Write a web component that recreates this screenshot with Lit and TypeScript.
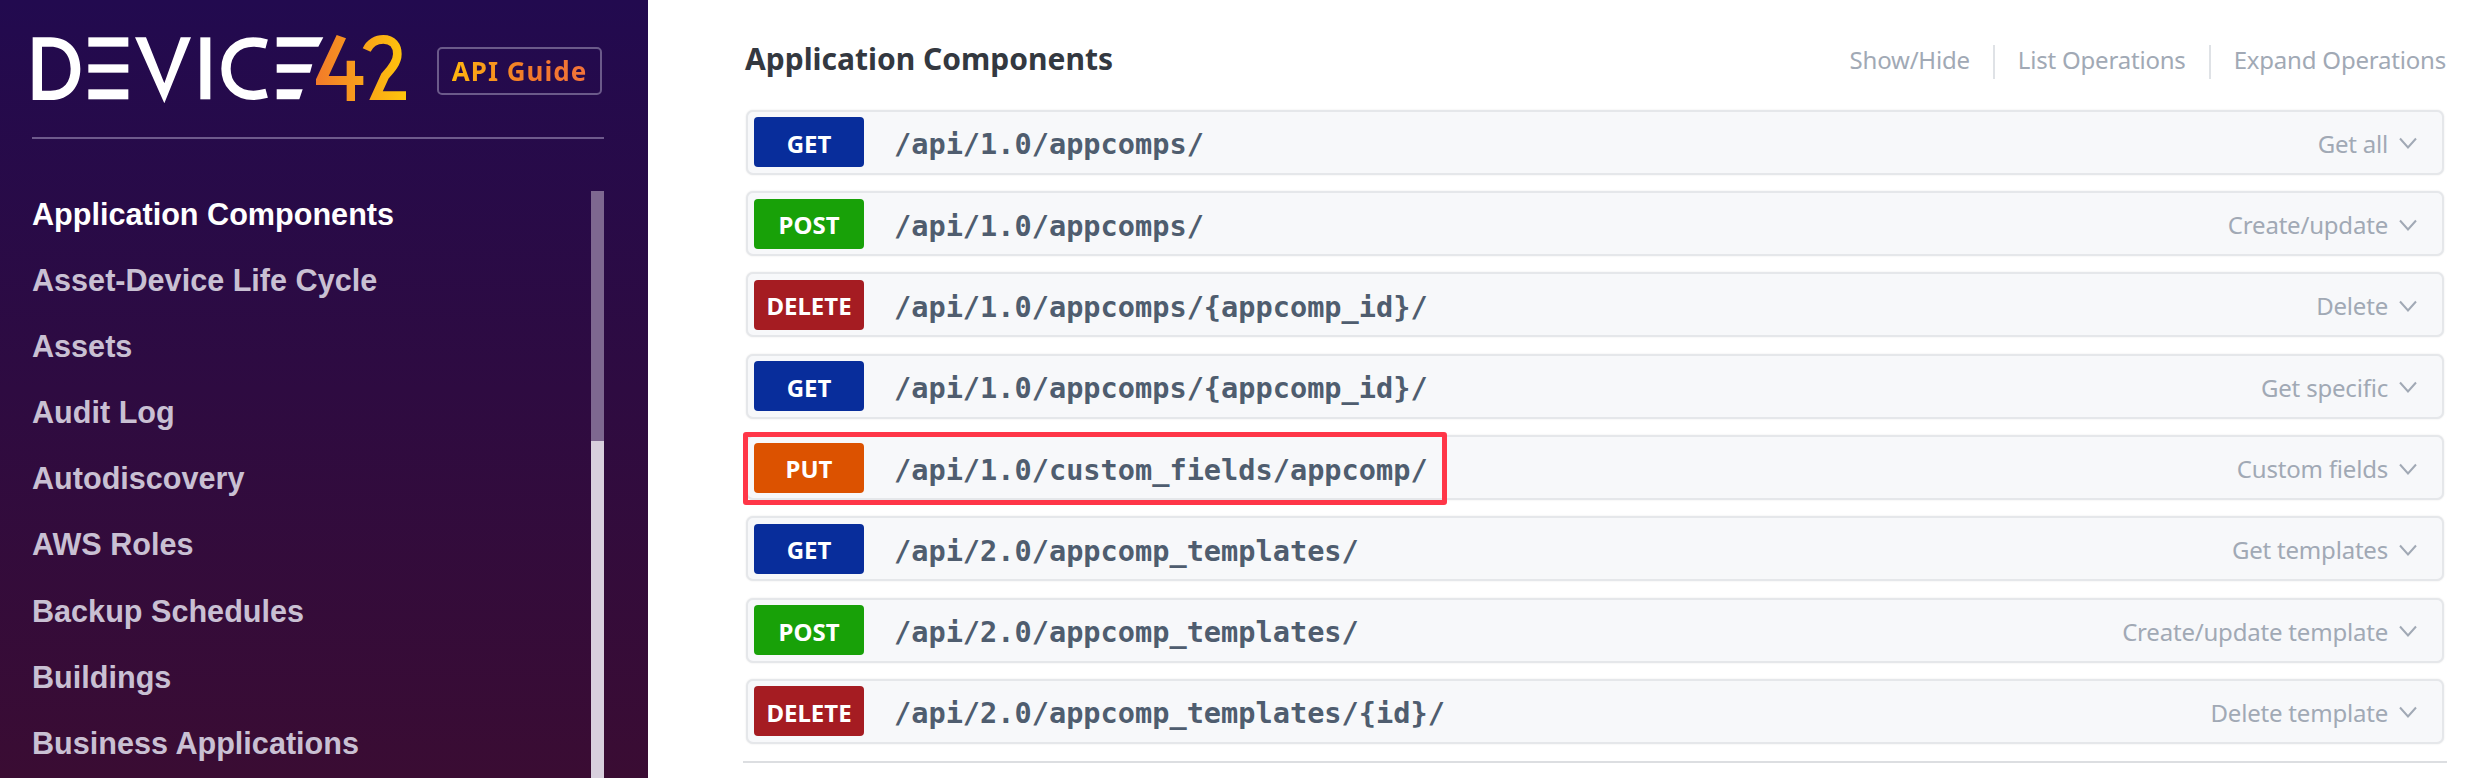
import { LitElement, html, css, svg } from "lit";
import { customElement } from "lit/decorators.js";

const NAV = ["Application Components","Asset-Device Life Cycle","Assets","Audit Log","Autodiscovery","AWS Roles","Backup Schedules","Buildings","Business Applications"];
const ROWS = [
  ["GET","/api/1.0/appcomps/","Get all"],
  ["POST","/api/1.0/appcomps/","Create/update"],
  ["DELETE","/api/1.0/appcomps/{appcomp_id}/","Delete"],
  ["GET","/api/1.0/appcomps/{appcomp_id}/","Get specific"],
  ["PUT","/api/1.0/custom_fields/appcomp/","Custom fields"],
  ["GET","/api/2.0/appcomp_templates/","Get templates"],
  ["POST","/api/2.0/appcomp_templates/","Create/update template"],
  ["DELETE","/api/2.0/appcomp_templates/{id}/","Delete template"],
];

const logo = svg`
  <defs>
    <linearGradient id="lg" gradientUnits="userSpaceOnUse" x1="888" y1="0" x2="1158" y2="0">
      <stop offset="0" stop-color="#f27a2a"/><stop offset="1" stop-color="#ffc60b"/>
    </linearGradient>
  </defs>
  <g fill="#fff">
    <path fill-rule="evenodd" d="M38 52H92C150 52 181 95 181 146C181 198 150 240 92 240H38ZM66 80V212H92C132 212 152 185 152 146C152 108 132 80 92 80Z"/>
    <rect x="205" y="52" width="120" height="28"/><rect x="205" y="133" width="120" height="25"/><rect x="205" y="208" width="120" height="30"/>
    <polygon points="345,52 378,52 433,190 482,52 513,52 433,250"/>
    <rect x="541" y="52" width="30" height="186"/>
    <path fill="none" stroke="#fff" stroke-width="28" d="M740 72C725 68 712 66 700 66C650 66 618 100 618 146C618 192 650 226 700 226C712 226 725 224 740 220"/>
    <polygon points="770,52 910,52 895,80 770,80"/><polygon points="770,133 877,133 870,158 770,158"/><polygon points="770,208 848,208 838,238 770,238"/>
  </g>
  <g fill="url(#lg)">
    <polygon points="950,45 978,55 926,168 980,168 980,122 1005,122 1005,168 1030,168 1030,195 1005,195 1005,243 980,243 980,195 888,195 888,178"/>
    <path fill="none" stroke="url(#lg)" stroke-width="26" d="M1040 90C1050 68 1070 58 1090 58C1118 58 1132 78 1132 102C1132 128 1112 150 1095 168L1068 227H1158"/>
  </g>`;

@customElement("app-root")
export class AppRoot extends LitElement {
  static styles = css`
    :host { display: block; width: 2480px; height: 778px; overflow: hidden; background: #fff; }
    * { box-sizing: border-box; }
    .page { display: flex; height: 778px; }
    .side { width: 648px; flex: none; height: 778px; padding: 0 44px 0 32px; overflow: hidden;
      background: linear-gradient(180deg, #220a4f 0%, #3a0c33 100%); display: flex; flex-direction: column; }
    .brand { display: flex; align-items: flex-start; height: 139px; flex: none; border-bottom: 2px solid #6e5a8c; }
    .logo { width: 400px; height: 100px; margin: 20px 0 0 -12px; flex: none; }
    .guide { margin: 47px 0 0 17px; width: 165px; height: 48px; border: 2px solid #6b5a8a; border-radius: 5px;
      display: flex; align-items: center; justify-content: center; }
    .guide span { font: 700 26px "Noto Sans", sans-serif; letter-spacing: 1px; color: transparent;
      background: linear-gradient(90deg, #ffb60f, #f27a2a 55%, #f2733a); -webkit-background-clip: text; background-clip: text; }
    .navwrap { flex: 1; display: flex; justify-content: space-between; margin-top: 42px; min-height: 0; }
    .nav { display: flex; flex-direction: column; }
    .nav a { font: 700 30.6px/66.1px "Liberation Sans", sans-serif; color: #c9c0d3; white-space: nowrap; height: 66.1px; flex: none; }
    .nav a.on { color: #fff; }
    .track { width: 13px; margin-top: 10px; background: #d8cfdd; flex: none; }
    .thumb { height: 250px; background: #7e6890; }
    .main { flex: 1; padding: 0 36px 0 98px; font-family: "Noto Sans", sans-serif; }
    .head { height: 109.7px; display: flex; justify-content: space-between; align-items: flex-start; }
    h2 { margin: 38px 0 0 -1px; font: 700 30px/42px "Noto Sans", sans-serif; color: #333840; white-space: nowrap; }
    .links { display: flex; align-items: flex-start; margin: 45px 0 0; height: 34px; }
    .links a { font-size: 24px; letter-spacing: -0.2px; color: #a1a9b5; white-space: nowrap; padding: 0 23px; height: 34px; border-left: 2px solid #dfe2e6; line-height: 30px; }
    .links a:first-child { border-left: 0; }
    .links a:last-child { padding-right: 0; margin-right: -2px; }
    .rows { display: flex; flex-direction: column; gap: 16.33px; }
    .row { position: relative; height: 65px; background: #f7f8fa; border: 2px solid #e5e7ea; border-radius: 7px;
      box-shadow: 0 0 2px rgba(0,0,0,.1);
      display: flex; align-items: center; padding: 0 25px 0 6px; }
    .badge { width: 110px; height: 50px; flex: none; border-radius: 4px; color: #fff; display: flex; align-items: center; justify-content: center;
      padding-top: 2px; font: 700 24px "Noto Sans", sans-serif; }
    .GET { background: #082d9b; } .POST { background: #18a108; } .DELETE { background: #a51c22; } .PUT { background: #dc5200; }
    .path { margin-left: 30px; padding-top: 4px; font: 700 28.6px "DejaVu Sans Mono", monospace; color: #4f5d6f; white-space: nowrap; }
    .sum { margin-left: auto; padding-top: 2px; font-size: 24px; letter-spacing: -0.2px; color: #a1a9b5; white-space: nowrap; }
    .chev { width: 18px; height: 12px; margin: 2px 0 0 11px; flex: none; fill: none; stroke: #a1a9b5; stroke-width: 2; }
    .mark { position: absolute; left: -5px; top: -5.3px; width: 704px; height: 73px; border: 5px solid #ff3648; border-radius: 3px; }
    .rule { height: 2px; margin: 17px -3px 0; background: #dcdee1; }
  `;

  render() {
    return html`<div class="page">
      <aside class="side">
        <div class="brand">
          <svg class="logo" viewBox="0 0 1200 300">${logo}</svg>
          <div class="guide"><span>API Guide</span></div>
        </div>
        <div class="navwrap">
          <nav class="nav">${NAV.map((n, i) => html`<a class=${i === 0 ? "on" : ""}>${n}</a>`)}</nav>
          <div class="track"><div class="thumb"></div></div>
        </div>
      </aside>
      <main class="main">
        <div class="head">
          <h2>Application Components</h2>
          <div class="links"><a>Show/Hide</a><a>List Operations</a><a>Expand Operations</a></div>
        </div>
        <div class="rows">
          ${ROWS.map(([m, p, s]) => html`<div class="row">
            <span class="badge ${m}">${m}</span>
            <span class="path">${p}</span>
            <span class="sum">${s}</span>
            <svg class="chev" viewBox="0 0 18 12"><polyline points="1,1.5 9,10.5 17,1.5"/></svg>
            ${m === "PUT" ? html`<div class="mark"></div>` : ""}
          </div>`)}
        </div>
        <div class="rule"></div>
      </main>
    </div>`;
  }
}
